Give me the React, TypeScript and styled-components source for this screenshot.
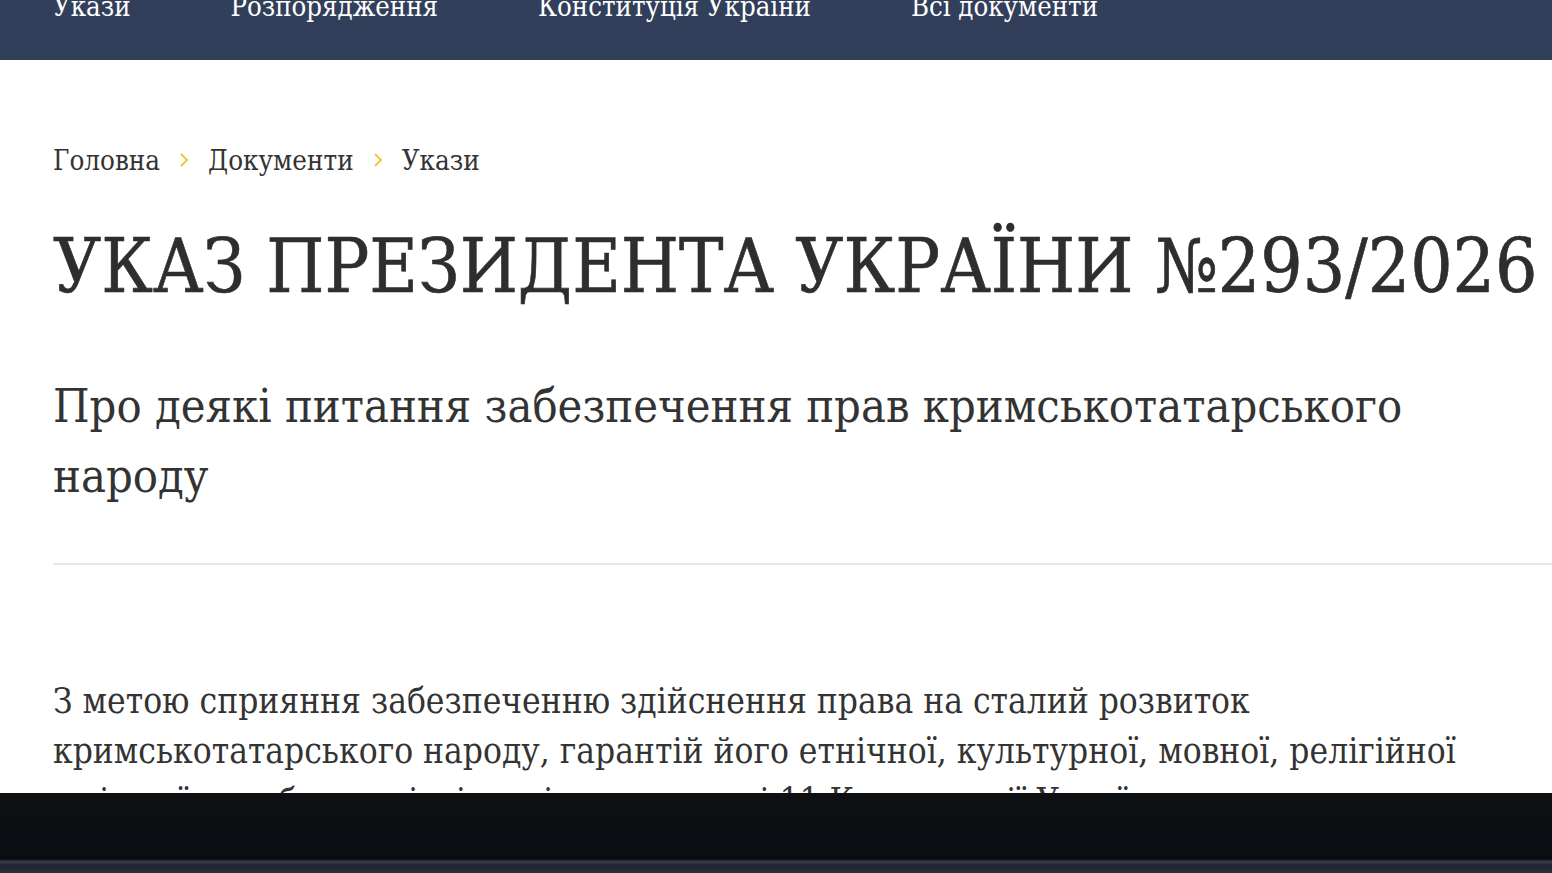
import React from 'react';
import styled, { createGlobalStyle } from 'styled-components';

const GlobalStyle = createGlobalStyle`
  html, body {
    margin: 0;
    padding: 0;
    background: #ffffff;
  }
  body {
    font-family: 'DejaVu Serif', 'Liberation Serif', serif;
    font-stretch: condensed;
    color: #333333;
  }
`;

const Screen = styled.div`
  width: 1552px;
  height: 873px;
  display: flex;
  flex-direction: column;
  overflow: hidden;
`;

const Page = styled.div`
  height: 793px;
  overflow: hidden;
  background: #ffffff;
`;

const Nav = styled.nav`
  height: 60px;
  background: #323f5b;
  overflow: hidden;
`;

const NavList = styled.ul`
  list-style: none;
  margin: -11px 0 0;
  padding: 0 0 0 53px;
  display: flex;
  gap: 100px;
`;

const NavItem = styled.li`
  color: #ffffff;
  font-size: 27.3px;
  line-height: 36px;
  white-space: nowrap;
`;

const Content = styled.main`
  padding: 0 0 0 53px;
`;

const Breadcrumbs = styled.div`
  display: flex;
  align-items: center;
  gap: 18px;
  margin-top: 82px;
  font-size: 27.5px;
  line-height: 36px;
  color: #333333;
`;

const Chevron = styled.span`
  display: flex;
  align-items: center;
  color: #f0c93a;
`;

const Title = styled.h1`
  margin: 43px 0 0;
  font-weight: 400;
  font-size: 74.2px;
  line-height: 90px;
  color: #2e2e2e;
  white-space: nowrap;
  -webkit-text-stroke: 0.6px #2e2e2e;
`;

const Subtitle = styled.h2`
  margin: 60px 0 0;
  font-weight: 400;
  font-size: 46.6px;
  line-height: 70px;
  color: #333333;
  max-width: 1420px;
`;

const Divider = styled.hr`
  margin: 52px 0 0;
  border: none;
  border-top: 2px solid #e6e6e6;
`;

const Body = styled.p`
  margin: 111px 0 0;
  font-size: 35px;
  line-height: 50px;
  color: #333333;
  max-width: 1430px;
`;

const BottomBar = styled.div`
  flex: 1;
  background: linear-gradient(
    to bottom,
    #0f1014 0%,
    #0d0e13 78%,
    #05060f 82%,
    #3b3e4b 86%,
    #1e2230 90%,
    #2c303d 100%
  );
`;

const ChevronIcon = () => (
  <svg width="12" height="18" viewBox="0 0 12 18" fill="none">
    <path d="M3 3l6 6-6 6" stroke="currentColor" strokeWidth="2" />
  </svg>
);

const navItems = ['Укази', 'Розпорядження', 'Конституція України', 'Всі документи'];
const crumbs = ['Головна', 'Документи', 'Укази'];

const App: React.FC = () => (
  <>
    <GlobalStyle />
    <Screen>
      <Page>
        <Nav>
          <NavList>
            {navItems.map(item => (
              <NavItem key={item}>{item}</NavItem>
            ))}
          </NavList>
        </Nav>
        <Content>
          <Breadcrumbs>
            {crumbs.map((c, i) => (
              <React.Fragment key={c}>
                {i > 0 && (
                  <Chevron>
                    <ChevronIcon />
                  </Chevron>
                )}
                <span>{c}</span>
              </React.Fragment>
            ))}
          </Breadcrumbs>
          <Title>УКАЗ ПРЕЗИДЕНТА УКРАЇНИ №293/2026</Title>
          <Subtitle>Про деякі питання забезпечення прав кримськотатарського народу</Subtitle>
          <Divider />
          <Body>
            З метою сприяння забезпеченню здійснення права на сталий розвиток
            кримськотатарського народу, гарантій його етнічної, культурної, мовної, релігійної
            та іншої самобутності, відповідно до статті 11 Конституції України постановляю:
          </Body>
        </Content>
      </Page>
      <BottomBar />
    </Screen>
  </>
);

export default App;
